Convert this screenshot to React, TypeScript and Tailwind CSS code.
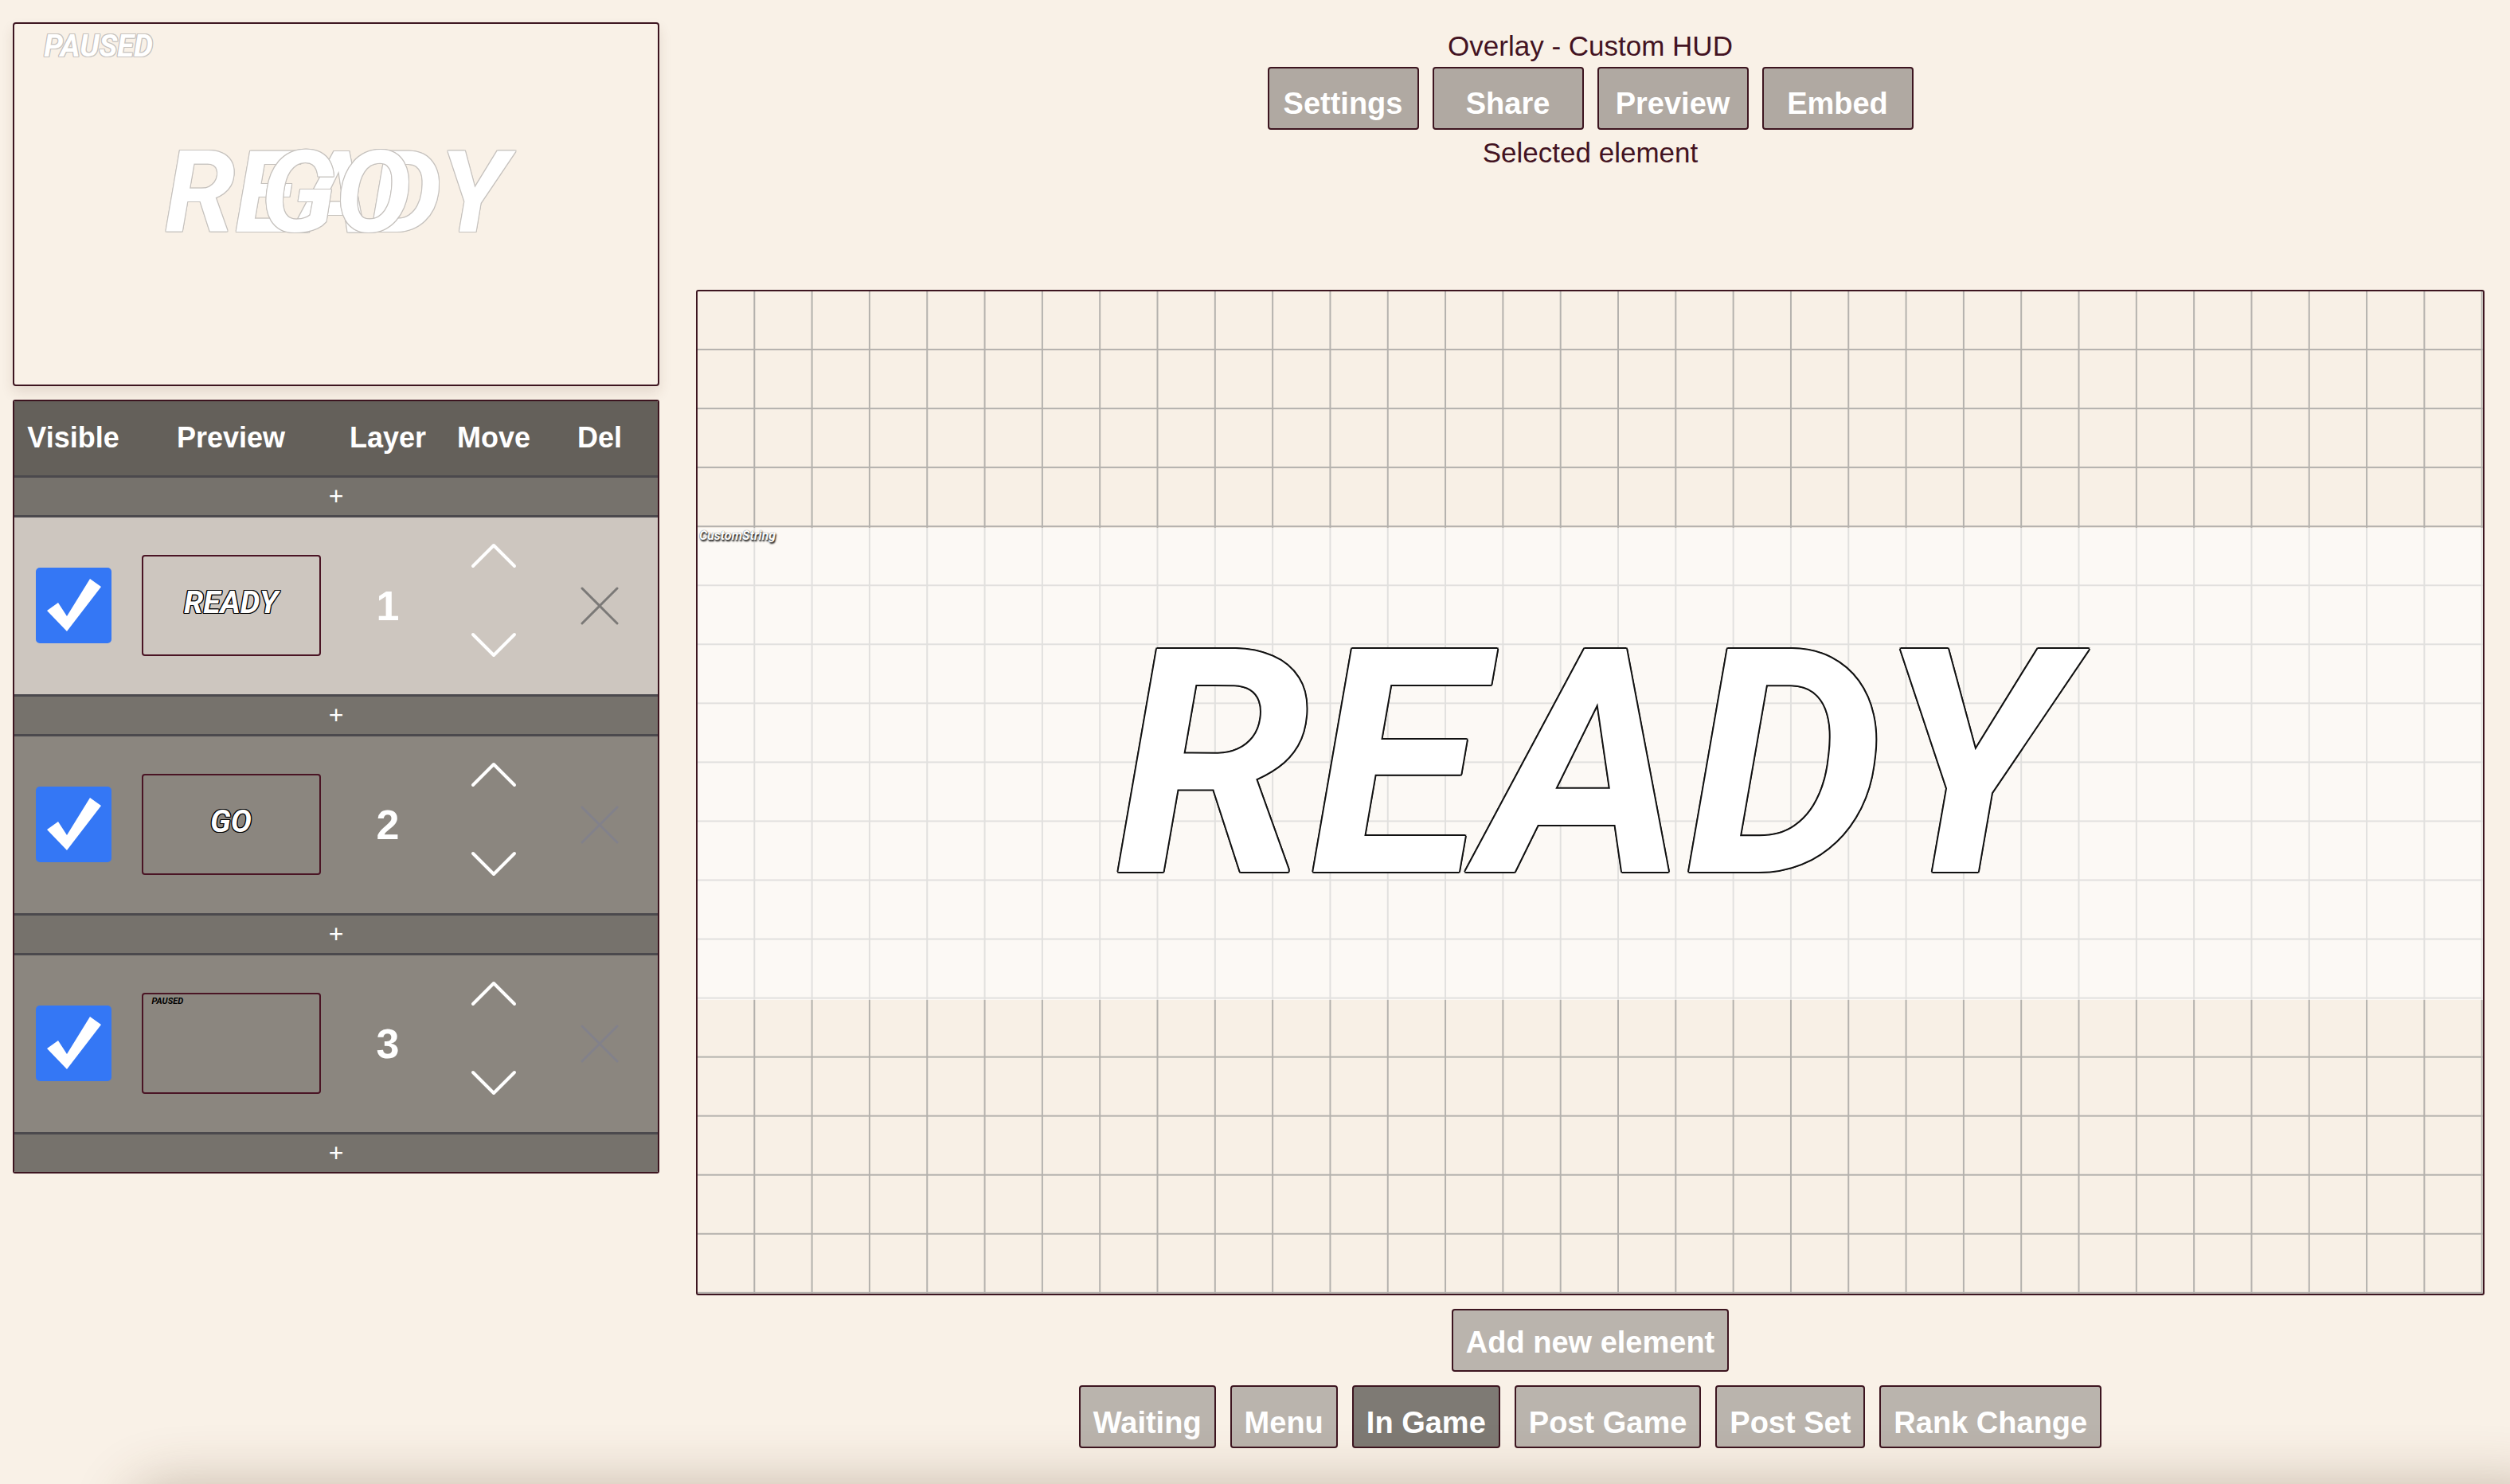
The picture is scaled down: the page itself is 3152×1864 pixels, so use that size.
import React from 'react';

type Layer = {
  id: number;
  label: string;
  kind: 'band' | 'corner';
  selected?: boolean;
};

const layers: Layer[] = [
  { id: 1, label: 'READY', kind: 'band', selected: true },
  { id: 2, label: 'GO', kind: 'band' },
  { id: 3, label: 'PAUSED', kind: 'corner' },
];

const uiFont = "font-['Liberation_Sans',Arial,sans-serif]";
const hudFont = "font-['Roboto','Liberation_Sans',sans-serif] font-bold italic";

// outlines done with stacked shadows (stroke shows the font's overlapping contours)
const outlineMain =
  '[text-shadow:2px_0_#111,-2px_0_#111,0_2px_#111,0_-2px_#111,1.5px_1.5px_#111,-1.5px_1.5px_#111,1.5px_-1.5px_#111,-1.5px_-1.5px_#111]';
const outlineThumb =
  '[text-shadow:1.2px_0_#000,-1.2px_0_#000,0_1.2px_#000,0_-1.2px_#000,1px_1px_#000,-1px_1px_#000,1px_-1px_#000,-1px_-1px_#000]';
const outlinePreview =
  '[text-shadow:1px_0_#c6c2be,-1px_0_#c6c2be,0_1px_#c6c2be,0_-1px_#c6c2be,1px_1px_#c6c2be,-1px_1px_#c6c2be,1px_-1px_#c6c2be,-1px_-1px_#c6c2be]';

const topButtons = ['Settings', 'Share', 'Preview', 'Embed'];
const states = ['Waiting', 'Menu', 'In Game', 'Post Game', 'Post Set', 'Rank Change'];

const Chevron = ({ down }: { down?: boolean }) => (
  <svg width="58" height="32" viewBox="0 0 58 32">
    <polyline
      points={down ? '3,3 29,29 55,3' : '3,29 29,3 55,29'}
      fill="none"
      stroke="#fff"
      strokeWidth="4"
      strokeLinecap="round"
      strokeLinejoin="round"
    />
  </svg>
);

const CheckBox = () => (
  <div className="w-[95px] h-[95px] rounded-[5px] bg-[#3477f5]">
    <svg width="95" height="95" viewBox="0 0 95 95">
      <polygon points="14,54 28,44 39,61 68,14 82,24 39,80" fill="#fff" />
    </svg>
  </div>
);

const DelIcon = ({ color }: { color: string }) => (
  <svg width="50" height="50" viewBox="0 0 50 50">
    <path d="M3 3 L47 47 M47 3 L3 47" stroke={color} strokeWidth="3" strokeLinecap="round" />
  </svg>
);

// mini copy of the canvas, 225px wide
const Thumb = ({ layer }: { layer: Layer }) => (
  <div className="relative w-[225px] h-[127px] border-2 border-[#4a1424] rounded-[4px] overflow-hidden">
    {layer.kind === 'band' ? (
      <div className="absolute inset-x-0 top-[23.6%] h-[47.1%] flex items-center justify-center">
        <span className={`${hudFont} text-[39px] leading-none text-white ${outlineThumb}`}>{layer.label}</span>
      </div>
    ) : (
      <span className={`absolute left-[5%] top-[2%] ${hudFont} text-[11px] leading-none text-black`}>
        {layer.label}
      </span>
    )}
  </div>
);

const PlusRow = () => (
  <div className="h-[50px] border-t-[3px] border-[#4b494d] bg-[#76726c] flex items-center justify-center text-white text-[32px] leading-none">
    +
  </div>
);

const LayerRow = ({ layer }: { layer: Layer }) => (
  <div
    className={`h-[225px] border-t-[3px] border-[#4b494d] grid grid-cols-[148px_248px_146px_120px_146px] items-center ${
      layer.selected ? 'bg-[#cdc6bf]' : 'bg-[#8b867f]'
    }`}
  >
    <div className="flex justify-center">
      <CheckBox />
    </div>
    <div className="flex justify-center">
      <Thumb layer={layer} />
    </div>
    <div className="text-center text-white font-bold text-[52px] leading-none">{layer.id}</div>
    <div className="flex flex-col items-center gap-[80px] -mt-[14px]">
      <Chevron />
      <Chevron down />
    </div>
    <div className="flex justify-center">
      <DelIcon color={layer.selected ? '#7b7977' : '#82818a'} />
    </div>
  </div>
);

const App: React.FC = () => {
  return (
    <div className={`relative h-screen overflow-hidden bg-[#f9f1e7] flex ${uiFont}`}>
      {/* left column: preview + layers */}
      <div className="w-[828px] shrink-0 pl-[16px] pt-[28px]">
        <div className="relative w-[812px] aspect-video border-2 border-[#3d1520] rounded-[4px] overflow-hidden shadow-[0_8px_16px_rgba(80,50,30,0.12)]">
          <span className={`absolute left-[4.6%] top-[2%] ${hudFont} text-[38px] leading-none text-white ${outlinePreview}`}>
            PAUSED
          </span>
          <div className="absolute inset-x-0 top-[23.6%] h-[47.1%] flex items-center justify-center">
            <span className={`${hudFont} text-[142px] leading-none text-white ${outlinePreview}`}>READY</span>
          </div>
          <div className="absolute inset-x-0 top-[23.6%] h-[47.1%] flex items-center justify-center">
            <span className={`${hudFont} text-[142px] leading-none text-white ${outlinePreview}`}>GO</span>
          </div>
        </div>

        <div className="mt-[17px] border-2 border-[#3d1520] rounded-[3px] overflow-hidden">
          <div className="h-[93px] grid grid-cols-[148px_248px_146px_120px_146px] items-center bg-[#64605a] text-white font-bold text-[36px] text-center">
            <div>Visible</div>
            <div>Preview</div>
            <div>Layer</div>
            <div>Move</div>
            <div>Del</div>
          </div>
          <PlusRow />
          {layers.map((layer) => (
            <React.Fragment key={layer.id}>
              <LayerRow layer={layer} />
              <PlusRow />
            </React.Fragment>
          ))}
        </div>
      </div>

      {/* right column: editor */}
      <div className="flex-1 flex flex-col items-center pl-[46px] pr-[32px] pt-[37px] text-[#431322]">
        <div className="text-[35px] leading-[42px]">Overlay - Custom HUD</div>
        <div className="mt-[5px] flex gap-[17px]">
          {topButtons.map((t) => (
            <button
              key={t}
              className="w-[190px] h-[79px] pt-[13px] bg-[#b0a9a2] border-2 border-[#3d1520] rounded-[4px] text-white font-bold text-[38px] leading-none"
            >
              {t}
            </button>
          ))}
        </div>
        <div className="mt-[8px] text-[35px] leading-[42px]">Selected element</div>

        <div className="mt-[151px] relative w-full aspect-video border-2 border-[#3d1520] rounded-[3px] overflow-hidden bg-[#f8f0e6] bg-[linear-gradient(to_right,transparent_calc(100%_-_2px),#b4b1ad_calc(100%_-_2px)),linear-gradient(to_bottom,transparent_calc(100%_-_2px),#b4b1ad_calc(100%_-_2px))] bg-[size:calc(100%/31)_calc(100%/17)]">
          <div className="absolute inset-x-0 top-[23.6%] h-[47.1%] bg-white/60 flex items-center justify-center">
            <span
              className={`absolute left-[2px] top-[1px] ${hudFont} text-[16px] leading-[18px] text-white [text-shadow:1px_2px_2px_rgba(0,0,0,0.95),0_0_1px_rgba(0,0,0,0.8)]`}
            >
              CustomString
            </span>
            <span className={`${hudFont} text-[394px] leading-none text-white ${outlineMain}`}>READY</span>
          </div>
        </div>

        <button className="mt-[17px] h-[79px] px-[16px] pt-[4px] bg-[#bab4ad] border-2 border-[#3d1520] rounded-[4px] text-white font-bold text-[38px] leading-none">
          Add new element
        </button>
        <div className="mt-[17px] flex gap-[18px]">
          {states.map((s) => (
            <button
              key={s}
              className={`h-[79px] px-[16px] pt-[14px] border-2 border-[#3d1520] rounded-[4px] text-white font-bold text-[38px] leading-none ${
                s === 'In Game' ? 'bg-[#7e7a74]' : 'bg-[#bab4ad]'
              }`}
            >
              {s}
            </button>
          ))}
        </div>
      </div>

      {/* soft shadow of the panel below the fold */}
      <div className="pointer-events-none absolute left-[160px] right-[-60px] top-full h-[100px] rounded-[50px] shadow-[0_0_70px_rgba(90,60,30,0.3)]" />
    </div>
  );
};

export default App;
